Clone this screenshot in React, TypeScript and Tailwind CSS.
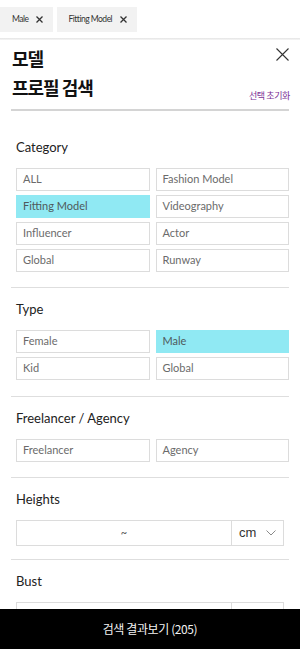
const lato = "font-['Lato','Noto_Sans_CJK_KR',sans-serif]";
const kr = "font-['Noto_Sans_CJK_KR','Noto_Sans',sans-serif]";

function Chip({ label, pl }: { label: string; pl: string }) {
  return (
    <div className={`flex h-[25px] items-center gap-[8px] bg-[#f2f2f2] pr-[10px] ${pl}`}>
      <span className={`${lato} text-[8.5px] tracking-[-0.5px] text-[#333]`}>{label}</span>
      <svg width="7" height="7" viewBox="0 0 7 7">
        <path d="M0.5 0.5 L6.5 6.5 M6.5 0.5 L0.5 6.5" stroke="#333" strokeWidth="1.3" />
      </svg>
    </div>
  );
}

function Option({ label, on }: { label: string; on?: boolean }) {
  return (
    <div
      className={`flex h-[23px] items-center border px-[6px] text-[11px] ${lato} ${
        on ? "border-[#90e9f3] bg-[#90e9f3] text-[#4f5a5c]" : "border-[#dcdcdc] bg-white text-[#6b6b6b]"
      }`}
    >
      {label}
    </div>
  );
}

function Section({ title, children, pb = "pb-[15px]" }: { title: string; children: React.ReactNode; pb?: string }) {
  return (
    <div>
      <div className={`pl-[16px] pr-[11px] pt-[13px] ${pb}`}>
        <div className={`${lato} h-[16px] text-[13px] leading-[16px] text-[#222]`}>{title}</div>
        <div className="mt-[13px]">{children}</div>
      </div>
      <div className="mx-[11px] h-px bg-[#dedede]" />
    </div>
  );
}

function Grid({ items, on }: { items: string[]; on?: string }) {
  return (
    <div className="grid grid-cols-2 gap-x-[6px] gap-y-[4px]">
      {items.map((it) => (
        <Option key={it} label={it} on={it === on} />
      ))}
    </div>
  );
}

function RangeInput() {
  return (
    <div className="mr-[5px] flex h-[26px] border border-[#dcdcdc]">
      <div className={`flex flex-1 items-center justify-center ${lato} text-[11px] text-[#555]`}>~</div>
      <div className="flex w-[52px] items-center border-l border-[#dcdcdc] pl-[7px]">
        <span className="font-['Liberation_Sans',sans-serif] text-[13px] text-[#333]">cm</span>
        <svg width="10" height="6" viewBox="0 0 10 6" className="ml-[10px]">
          <path d="M0.5 0.5 L5 5 L9.5 0.5" fill="none" stroke="#8a8a8a" strokeWidth="1" />
        </svg>
      </div>
    </div>
  );
}

export default function App() {
  return (
    <div className="flex h-[649px] w-[300px] flex-col overflow-hidden bg-white">
      <div className="flex-1 overflow-hidden">
        {/* selected filters */}
        <div className="flex h-[38px] items-start gap-[4px] pt-[7px]">
          <Chip label="Male" pl="pl-[12px]" />
          <Chip label="Fitting Model" pl="pl-[11px]" />
        </div>
        <div className="h-[2px] bg-gradient-to-b from-[#e4e4e4] to-[#f6f6f6]" />

        {/* header */}
        <div className="flex justify-between pl-[12px] pr-[10px] pt-[4px]">
          <h1 className={`${kr} text-[18px] font-bold leading-[29px] tracking-[-1px] text-[#111]`}>
            모델
            <br />
            프로필 검색
          </h1>
          <div className="flex flex-col items-end justify-between">
            <svg width="13" height="13" viewBox="0 0 13 13" className="mr-[1px] mt-[4px]">
              <path d="M0.5 0.5 L12.5 12.5 M12.5 0.5 L0.5 12.5" stroke="#333" strokeWidth="1.1" />
            </svg>
            <span className={`${kr} text-[9px] leading-[12px] tracking-[-0.4px] text-[#7a2f95]`}>선택 초기화</span>
          </div>
        </div>
        <div className="mx-[11px] mt-[7px] h-[2px] bg-[#d4d4d4]" />
        <div className="h-[15px]" />

        <Section title="Category">
          <Grid
            items={["ALL", "Fashion Model", "Fitting Model", "Videography", "Influencer", "Actor", "Global", "Runway"]}
            on="Fitting Model"
          />
        </Section>
        <Section title="Type" pb="pb-[16px]">
          <div className="grid grid-cols-2 gap-x-[6px] gap-y-[4px]">
            <Option label="Female" />
            <Option label="Male" on />
            <Option label="Kid" />
            <Option label="Global" />
          </div>
        </Section>
        <Section title="Freelancer / Agency">
          <Grid items={["Freelancer", "Agency"]} />
        </Section>
        <Section title="Heights" pb="pb-[13px]">
          <RangeInput />
        </Section>
        <Section title="Bust">
          <RangeInput />
        </Section>
      </div>

      {/* result button */}
      <div className="flex h-[40px] shrink-0 items-center justify-center bg-black">
        <span className={`${kr} text-[12px] tracking-[-0.4px] text-[#f2f2f2]`}>검색 결과보기 (205)</span>
      </div>
    </div>
  );
}
